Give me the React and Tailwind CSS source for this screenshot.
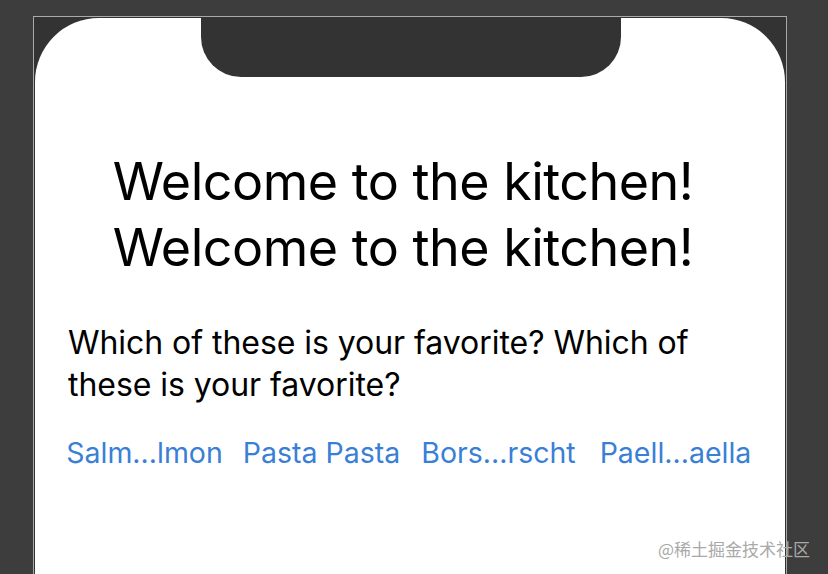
const dishes = ["Salm...lmon", "Pasta Pasta", "Bors...rscht", "Paell...aella"];

const App = () => {
  return (
    <div className="relative w-[828px] h-[574px] overflow-hidden bg-[#3d3d3d] pt-[16px] pl-[33px]">
      {/* Device frame */}
      <div className="w-[754px] h-[600px] border border-[#a9a9a9] bg-[#333333] p-[1px]">
        <div
          className="relative h-full bg-white rounded-t-[64px] pt-[131px]"
          style={{ fontFamily: "Inter, 'Liberation Sans', sans-serif" }}
        >
          {/* Notch */}
          <div className="absolute top-0 left-[166px] w-[420px] h-[59px] bg-[#333333] rounded-b-[40px]"></div>

          {/* Title */}
          <div className="pr-[14px] text-center text-black text-[52px] leading-[66px] tracking-[-0.5px]">
            <div>Welcome to the kitchen!</div>
            <div>Welcome to the kitchen!</div>
          </div>

          {/* Question */}
          <p className="mt-[41px] px-[33px] text-black text-[32px] leading-[42px] tracking-[-0.05px]">
            Which of these is your favorite? Which of these is your favorite?
          </p>

          {/* Dishes */}
          <div className="mt-[29px] px-[21px] grid grid-cols-4 text-center text-[#3a7fd6] text-[28.5px] leading-[36px]">
            {dishes.map((dish) => (
              <span key={dish} className="whitespace-nowrap">
                {dish}
              </span>
            ))}
          </div>
        </div>
      </div>

      {/* Watermark */}
      <div
        className="absolute right-[18px] bottom-[15px] text-[17px] leading-[20px] text-[#a9a9a9]"
        style={{ fontFamily: "'Noto Sans CJK SC', sans-serif" }}
      >
        @稀土掘金技术社区
      </div>
    </div>
  );
};

export default App;
